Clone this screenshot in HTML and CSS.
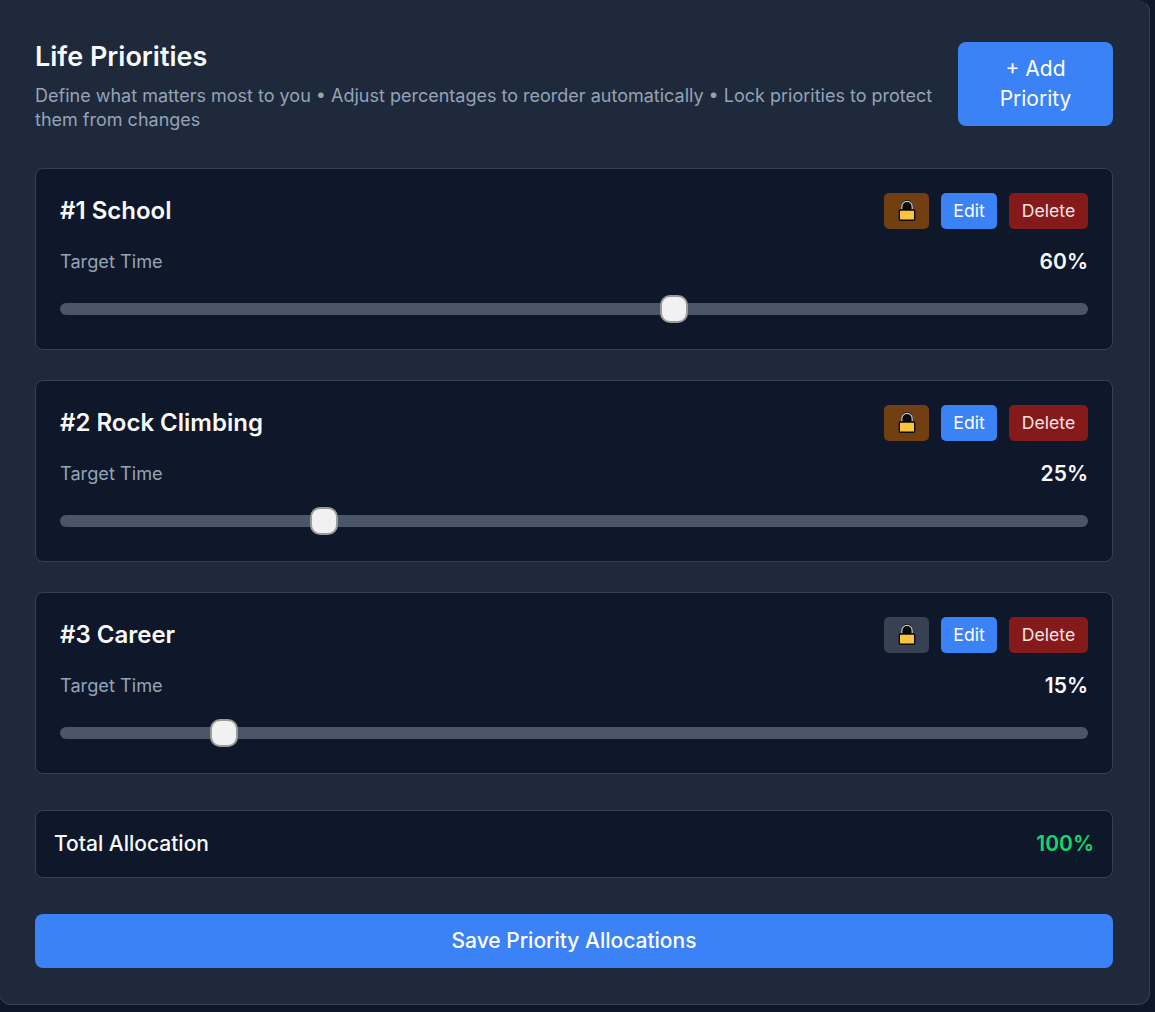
FILE: index.html
```html
<!DOCTYPE html>
<html lang="en">
<head>
<meta charset="utf-8">
<title>Life Priorities</title>
<link rel="stylesheet" href="styles.css">
</head>
<body>
<svg class="defs" width="0" height="0" aria-hidden="true">
  <symbol id="lock" viewBox="0 0 18 21">
    <path d="M4.5 11V6.5a4.5 5 0 0 1 9 0V11Z" fill="#0b0b0b" stroke="#0b0b0b" stroke-width="3"/>
    <path d="M3.8 9.5V6.5a5.2 5.2 0 0 1 10.4 0V9.5" fill="none" stroke="#c3ccd8" stroke-width="1.2"/>
    <rect x="1.3" y="10" width="15.4" height="10.2" rx="1.2" fill="#fcc340" stroke="#0b0b0b" stroke-width="1.4"/>
  </symbol>
</svg>
<main class="panel">
  <header class="head">
    <div class="head-text">
      <h1>Life Priorities</h1>
      <p>Define what matters most to you • Adjust percentages to reorder automatically • Lock priorities to protect them from changes</p>
    </div>
    <button class="btn add">+ Add Priority</button>
  </header>

  <section class="card">
    <div class="row">
      <h2>#1 School</h2>
      <div class="actions">
        <button class="btn small lock on"><svg class="lock-icon"><use href="#lock"/></svg></button>
        <button class="btn small edit">Edit</button>
        <button class="btn small del">Delete</button>
      </div>
    </div>
    <div class="row target"><span class="label">Target Time</span><span class="pct">60%</span></div>
    <input class="slider" type="range" min="0" max="100" value="60">
  </section>

  <section class="card">
    <div class="row">
      <h2>#2 Rock Climbing</h2>
      <div class="actions">
        <button class="btn small lock on"><svg class="lock-icon"><use href="#lock"/></svg></button>
        <button class="btn small edit">Edit</button>
        <button class="btn small del">Delete</button>
      </div>
    </div>
    <div class="row target"><span class="label">Target Time</span><span class="pct">25%</span></div>
    <input class="slider" type="range" min="0" max="100" value="25">
  </section>

  <section class="card">
    <div class="row">
      <h2>#3 Career</h2>
      <div class="actions">
        <button class="btn small lock"><svg class="lock-icon"><use href="#lock"/></svg></button>
        <button class="btn small edit">Edit</button>
        <button class="btn small del">Delete</button>
      </div>
    </div>
    <div class="row target"><span class="label">Target Time</span><span class="pct">15%</span></div>
    <input class="slider" type="range" min="0" max="100" value="15">
  </section>

  <div class="total"><span>Total Allocation</span><span class="total-val">100%</span></div>
  <button class="btn save">Save Priority Allocations</button>
</main>
</body>
</html>
```
FILE: styles.css
```css
* { box-sizing: border-box; }
html, body { margin: 0; padding: 0; }
body {
  background: #0f172a;
  font-family: Inter, "Liberation Sans", sans-serif;
  color: #f8fafc;
  height: 1012px;
  overflow: hidden;
  padding-right: 5px;
}
.defs { display: block; height: 0; }
.panel {
  background: #1e293b;
  border: 1px solid #334155;
  border-top-color: #1e293b;
  border-radius: 0 12px 12px 12px;
  padding: 41px 36px 36px 35px;
  height: 1005px;
  margin-left: -1px;
}
.head { display: flex; justify-content: space-between; align-items: flex-start; gap: 24px; margin-bottom: 36px; }
.head-text { flex: 1; }
h1 { margin: 0; font-size: 27px; line-height: 29px; font-weight: 600; color: #f8fafc; }
.head-text p { margin: 13px 0 0; font-size: 18px; line-height: 24px; color: #94a3b8; }
.btn { border: 0; font-family: inherit; color: #fff; background: #3b82f6; cursor: pointer; }
.add { width: 155px; height: 84px; flex: none; border-radius: 8px; font-size: 21px; line-height: 30px; font-weight: 400; padding: 12px 24px; }
.card {
  background: #0f172a;
  border: 1px solid #334155;
  border-radius: 8px;
  height: 182px;
  padding: 24px 24px 0;
  margin-bottom: 30px;
}
.row { display: flex; justify-content: space-between; align-items: center; }
h2 { margin: 0; font-size: 24px; line-height: 36px; font-weight: 600; }
.actions { display: flex; gap: 12px; }
.small { height: 36px; border-radius: 5px; font-size: 17.6px; padding: 0 0 1px; display: flex; align-items: center; justify-content: center; }
.lock { width: 45px; background: #374151; }
.lock.on { background: #713f12; }
.lock-icon { width: 18px; height: 21px; }
.edit { width: 56px; }
.del { width: 79px; background: #851a1a; color: #fee2e2; }
.target { margin-top: 20px; height: 26px; }
.label { font-size: 18.2px; color: #94a3b8; padding-bottom: 2px; }
.pct { font-size: 21px; font-weight: 600; color: #f8fafc; padding-bottom: 2px; }
.slider {
  appearance: none;
  -webkit-appearance: none;
  display: block;
  width: 100%;
  height: 12px;
  margin: 28px 0 0;
  background: #4a5568;
  border-radius: 6px;
  outline: none;
}
.slider::-webkit-slider-thumb {
  -webkit-appearance: none;
  appearance: none;
  width: 28px;
  height: 28px;
  border-radius: 10px;
  background: #f1f1f1;
  border: 2px solid #9a9a9a;
}
.total {
  display: flex;
  justify-content: space-between;
  align-items: center;
  height: 68px;
  margin-top: 36px;
  padding: 0 18px 1px;
  background: #0f172a;
  border: 1px solid #334155;
  border-radius: 8px;
  font-size: 21px;
  font-weight: 500;
}
.total-val { font-size: 21px; font-weight: 600; color: #10d96e; }
.save { display: block; width: 100%; height: 54px; margin-top: 36px; padding-bottom: 2px; border-radius: 8px; font-size: 21px; font-weight: 500; }
```
